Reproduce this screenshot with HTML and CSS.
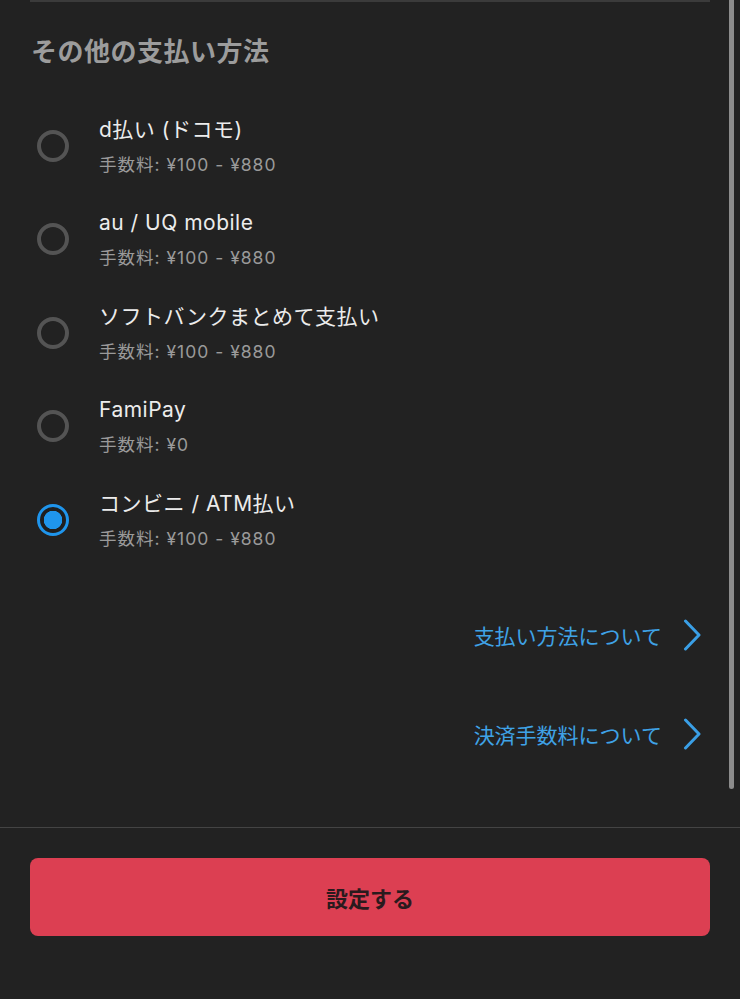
FILE: index.html
```html
<!DOCTYPE html>
<html lang="ja">
<head>
<meta charset="utf-8">
<title>支払い方法</title>
<link rel="stylesheet" href="styles.css">
</head>
<body>
<div class="page">
  <div class="content">
    <div class="top-line"></div>
    <h2 class="section-title">その他の支払い方法</h2>
    <ul class="methods">
      <li class="method">
        <span class="radio"></span>
        <div class="method-text">
          <div class="method-name">d払い (ドコモ)</div>
          <div class="method-fee">手数料: ¥100 - ¥880</div>
        </div>
      </li>
      <li class="method">
        <span class="radio"></span>
        <div class="method-text">
          <div class="method-name">au / UQ mobile</div>
          <div class="method-fee">手数料: ¥100 - ¥880</div>
        </div>
      </li>
      <li class="method">
        <span class="radio"></span>
        <div class="method-text">
          <div class="method-name">ソフトバンクまとめて支払い</div>
          <div class="method-fee">手数料: ¥100 - ¥880</div>
        </div>
      </li>
      <li class="method">
        <span class="radio"></span>
        <div class="method-text">
          <div class="method-name">FamiPay</div>
          <div class="method-fee">手数料: ¥0</div>
        </div>
      </li>
      <li class="method">
        <span class="radio radio-on"></span>
        <div class="method-text">
          <div class="method-name">コンビニ / ATM払い</div>
          <div class="method-fee">手数料: ¥100 - ¥880</div>
        </div>
      </li>
    </ul>
    <div class="links">
      <a class="link" href="#">支払い方法について
        <svg class="chev" width="18" height="32" viewBox="0 0 18 32"><path d="M2.5 2 L16 16 L2.5 30" fill="none" stroke="#3a9fe6" stroke-width="3" stroke-linecap="round" stroke-linejoin="round"/></svg>
      </a>
      <a class="link" href="#">決済手数料について
        <svg class="chev" width="18" height="32" viewBox="0 0 18 32"><path d="M2.5 2 L16 16 L2.5 30" fill="none" stroke="#3a9fe6" stroke-width="3" stroke-linecap="round" stroke-linejoin="round"/></svg>
      </a>
    </div>
  </div>
  <div class="footer">
    <button class="submit">設定する</button>
  </div>
  <div class="scrollbar"></div>
</div>
</body>
</html>
```

FILE: styles.css
```css
html, body {
  margin: 0;
  padding: 0;
  background: #222222;
}
body {
  font-family: Inter, "Noto Sans CJK JP", sans-serif;
  color: #ececec;
}
.page {
  position: relative;
  width: 740px;
  height: 999px;
  overflow: hidden;
}
.content {
  padding: 0 30px;
}
.top-line {
  height: 2px;
  background: #3b3b3b;
}
.section-title {
  margin: 31px 0 0 1px;
  font-family: "Noto Sans CJK JP", sans-serif;
  font-size: 26px;
  line-height: 34px;
  font-weight: 700;
  letter-spacing: 0.5px;
  color: #9c9c9c;
}
.methods {
  list-style: none;
  margin: 32px 0 0;
  padding: 0;
}
.method {
  display: flex;
  align-items: center;
  height: 93.5px;
}
.radio {
  box-sizing: border-box;
  width: 32px;
  height: 32px;
  margin-left: 7px;
  margin-right: 30px;
  border-radius: 50%;
  border: 4px solid #545454;
  flex: none;
}
.radio-on {
  border: 3px solid #1f95ec;
  background: radial-gradient(circle, #1f95ec 0 9px, #1f1f1f 9.5px);
}
.method-text {
  display: flex;
  flex-direction: column;
  gap: 8px;
}
.method-name {
  font-size: 21px;
  line-height: 30px;
  letter-spacing: 0.5px;
  color: #ececec;
}
.method-fee {
  font-size: 17.5px;
  line-height: 24px;
  letter-spacing: 1px;
  color: #9a9a9a;
}
.links {
  margin-top: 19px;
  display: flex;
  flex-direction: column;
  align-items: flex-end;
  padding-right: 9px;
}
.link {
  display: flex;
  align-items: center;
  gap: 21px;
  height: 99px;
  font-family: "Noto Sans CJK JP", sans-serif;
  font-size: 21px;
  color: #3fa2e6;
  text-decoration: none;
}
.chev {
  display: block;
}
.footer {
  margin-top: 43px;
  border-top: 1px solid #444444;
  padding: 30px 30px 0;
}
.submit {
  display: block;
  width: 100%;
  height: 78px;
  border: none;
  border-radius: 8px;
  background: #dc3f52;
  color: #2a1a1d;
  font-family: "Noto Sans CJK JP", sans-serif;
  font-size: 22px;
  font-weight: 700;
}
.scrollbar {
  position: absolute;
  top: 0;
  left: 729px;
  width: 5px;
  height: 789px;
  border-radius: 0 0 3px 3px;
  background: #8c8c8c;
}
```
